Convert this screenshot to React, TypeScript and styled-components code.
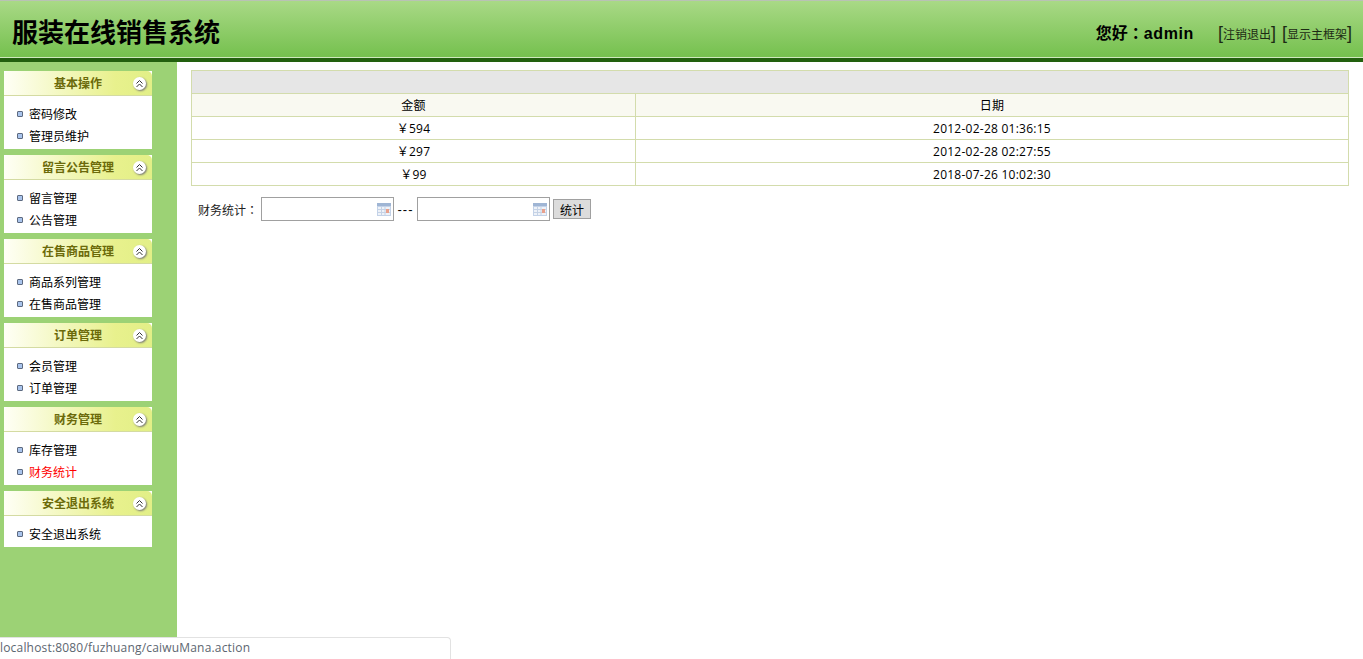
import React from 'react';
import styled, { createGlobalStyle } from 'styled-components';

const FONT = '"Liberation Sans", "Noto Sans CJK SC", sans-serif';

const GlobalStyle = createGlobalStyle`
    html, body {
        margin: 0;
        padding: 0;
        height: 100%;
        overflow: hidden;
        background: #fff;
        font-family: ${FONT};
        font-size: 12px;
        color: #000;
    }
`;

const Page = styled.div`
    display: flex;
    flex-direction: column;
    height: 659px;
`;

const Header = styled.header`
    flex: none;
    height: 62px;
    box-sizing: border-box;
    display: flex;
    align-items: center;
    justify-content: space-between;
    padding: 9px 11px 2px 12px;
    border-top: 1px solid #b9c2b4;
    border-bottom: 4px solid #22600e;
    box-shadow: inset 0 -1px 0 #cfe8bd;
    background: linear-gradient(#a9d986, #74c04d);
`;

const Logo = styled.h1`
    margin: 0;
    font-size: 26px;
    font-weight: 700;
    line-height: 32px;
`;

const UserArea = styled.div`
    display: flex;
    align-items: center;
`;

const Greeting = styled.span`
    font-family: "Liberation Sans", "Noto Sans CJK JP", sans-serif;
    font-size: 16px;
    font-weight: 700;
    margin: 0 18px 3px 0;
`;

const UserName = styled.span`
    letter-spacing: 0.6px;
`;

const TopLink = styled.span`
    font-size: 12px;
    margin-left: 6px;
    color: #1c2a14;

    &::before {
        content: '[';
        font-size: 18px;
        font-weight: 300;
    }

    &::after {
        content: ']';
        font-size: 18px;
        font-weight: 300;
    }
`;

const Body = styled.div`
    flex: 1;
    display: flex;
    min-height: 0;
`;

const Sidebar = styled.aside`
    flex: none;
    width: 177px;
    box-sizing: border-box;
    padding: 9px 25px 0 4px;
    background: #9cd275;
    display: flex;
    flex-direction: column;
    gap: 6px;
`;

const Group = styled.section`
    background: #fff;
`;

const GroupTitle = styled.div`
    position: relative;
    height: 25px;
    box-sizing: border-box;
    border-bottom: 1px solid #d4dba2;
    border-radius: 5px 5px 0 0;
    background: linear-gradient(90deg, #fffff6, #e8f18d 75%, #e2ef87);
    color: #6b6a0a;
    font-weight: 700;
    line-height: 26px;
    text-align: center;
`;

const Toggle = styled.span`
    position: absolute;
    top: 6px;
    right: 6px;
    width: 13px;
    height: 13px;
    border-radius: 50%;
    background: #fff;
    box-shadow: 1px 1px 2px #777;
    display: flex;
    align-items: center;
    justify-content: center;
`;

const ItemList = styled.ul`
    list-style: none;
    margin: 0;
    padding: 6px 0 3px;
`;

const Item = styled.li<{ $active?: boolean }>`
    display: flex;
    align-items: center;
    height: 22px;
    padding-left: 13px;
    color: ${({ $active }) => ($active ? '#ff0000' : '#000')};
`;

const Bullet = styled.i`
    width: 4px;
    height: 4px;
    margin: 1px 6px 0 0;
    border: 1px solid #5d6a80;
    border-radius: 1px;
    background: #a9c4ec;
`;

const Content = styled.main`
    flex: 1;
    padding: 8px 14px 0;
`;

const DataTable = styled.table`
    width: 100%;
    border-collapse: collapse;
    table-layout: fixed;
    border: 1px solid #d3dcac;
    font-family: "Open Sans", "Noto Sans CJK SC", sans-serif;
    font-size: 12px;
    letter-spacing: 0.25px;
`;

const CaptionCell = styled.td`
    height: 22px;
    padding: 0;
    background: #e6e6e6;
`;

const HeadCell = styled.td`
    height: 22px;
    padding: 0;
    border: 1px solid #d3dcac;
    background: #f9f9f1;
    text-align: center;
`;

const Cell = styled.td`
    height: 22px;
    padding: 0;
    border: 1px solid #d3dcac;
    text-align: center;
`;

const FilterRow = styled.div`
    display: flex;
    align-items: center;
    margin-top: 11px;
    padding-left: 7px;
`;

const FilterLabel = styled.span`
    font-family: "Liberation Sans", "Noto Sans CJK JP", sans-serif;
    color: #222;
`;

const DateBox = styled.div`
    box-sizing: border-box;
    width: 133px;
    height: 24px;
    margin-left: 3px;
    padding-right: 2px;
    border: 1px solid #a0a0a0;
    background: #fff;
    display: flex;
    align-items: center;
    justify-content: flex-end;
`;

const Dash = styled.span`
    width: 17px;
    margin-left: 3px;
    font-size: 13px;
    letter-spacing: 1px;
    text-align: center;
`;

const SubmitButton = styled.button`
    box-sizing: border-box;
    width: 38px;
    height: 20px;
    margin: 0 0 0 3px;
    padding: 0;
    border: 1px solid #a0a0a0;
    background: #dcdcdc;
    font: inherit;
    color: #000;
`;

const StatusBar = styled.div`
    position: absolute;
    left: 0;
    top: 637px;
    width: 451px;
    height: 22px;
    box-sizing: border-box;
    border: 1px solid #e2e2e2;
    border-left: none;
    border-bottom: none;
    border-radius: 0 4px 0 0;
    background: #fff;
    color: #5c6670;
    font-family: "Open Sans", "Liberation Sans", sans-serif;
    font-size: 12px;
    letter-spacing: 0.18px;
    line-height: 20px;
`;

const ToggleIcon = () => (
    <svg width="9" height="9" viewBox="0 0 9 9" fill="none" stroke="#333" strokeWidth="1">
        <path d="M1.5 4.5 4.5 1.5 7.5 4.5M1.5 8 4.5 5 7.5 8" />
    </svg>
);

const CalendarIcon = () => (
    <svg width="14" height="13" viewBox="0 0 14 13">
        <rect x="0" y="0" width="14" height="13" fill="#c3d2e8" />
        <rect x="0" y="0" width="14" height="3" fill="#9fb5d4" />
        <rect x="1" y="4" width="12" height="8" fill="#eef2f8" />
        <path d="M4.5 4v8M8 4v8M1 6.5h12M1 9.5h12" stroke="#c5d2e5" strokeWidth="1" />
        <rect x="9" y="6" width="3" height="4" fill="#e8a08c" />
    </svg>
);

const menus = [
    { title: '基本操作', items: ['密码修改', '管理员维护'] },
    { title: '留言公告管理', items: ['留言管理', '公告管理'] },
    { title: '在售商品管理', items: ['商品系列管理', '在售商品管理'] },
    { title: '订单管理', items: ['会员管理', '订单管理'] },
    { title: '财务管理', items: ['库存管理', '财务统计'] },
    { title: '安全退出系统', items: ['安全退出系统'] },
];

const records = [
    { amount: '￥594', date: '2012-02-28 01:36:15' },
    { amount: '￥297', date: '2012-02-28 02:27:55' },
    { amount: '￥99', date: '2018-07-26 10:02:30' },
];

const App: React.FC = () => (
    <Page>
        <GlobalStyle />
        <Header>
            <Logo>服装在线销售系统</Logo>
            <UserArea>
                <Greeting>
                    您好：<UserName>admin</UserName>
                </Greeting>
                <TopLink>注销退出</TopLink>
                <TopLink>显示主框架</TopLink>
            </UserArea>
        </Header>
        <Body>
            <Sidebar>
                {menus.map((menu) => (
                    <Group key={menu.title}>
                        <GroupTitle>
                            {menu.title}
                            <Toggle>
                                <ToggleIcon />
                            </Toggle>
                        </GroupTitle>
                        <ItemList>
                            {menu.items.map((item) => (
                                <Item key={item} $active={item === '财务统计'}>
                                    <Bullet />
                                    {item}
                                </Item>
                            ))}
                        </ItemList>
                    </Group>
                ))}
            </Sidebar>
            <Content>
                <DataTable>
                    <colgroup>
                        <col width="444" />
                        <col />
                    </colgroup>
                    <tbody>
                        <tr>
                            <CaptionCell colSpan={2} />
                        </tr>
                        <tr>
                            <HeadCell>金额</HeadCell>
                            <HeadCell>日期</HeadCell>
                        </tr>
                        {records.map((record) => (
                            <tr key={record.date}>
                                <Cell>{record.amount}</Cell>
                                <Cell>{record.date}</Cell>
                            </tr>
                        ))}
                    </tbody>
                </DataTable>
                <FilterRow>
                    <FilterLabel>财务统计：</FilterLabel>
                    <DateBox>
                        <CalendarIcon />
                    </DateBox>
                    <Dash>---</Dash>
                    <DateBox>
                        <CalendarIcon />
                    </DateBox>
                    <SubmitButton>统计</SubmitButton>
                </FilterRow>
            </Content>
        </Body>
        <StatusBar>localhost:8080/fuzhuang/caiwuMana.action</StatusBar>
    </Page>
);

export default App;
